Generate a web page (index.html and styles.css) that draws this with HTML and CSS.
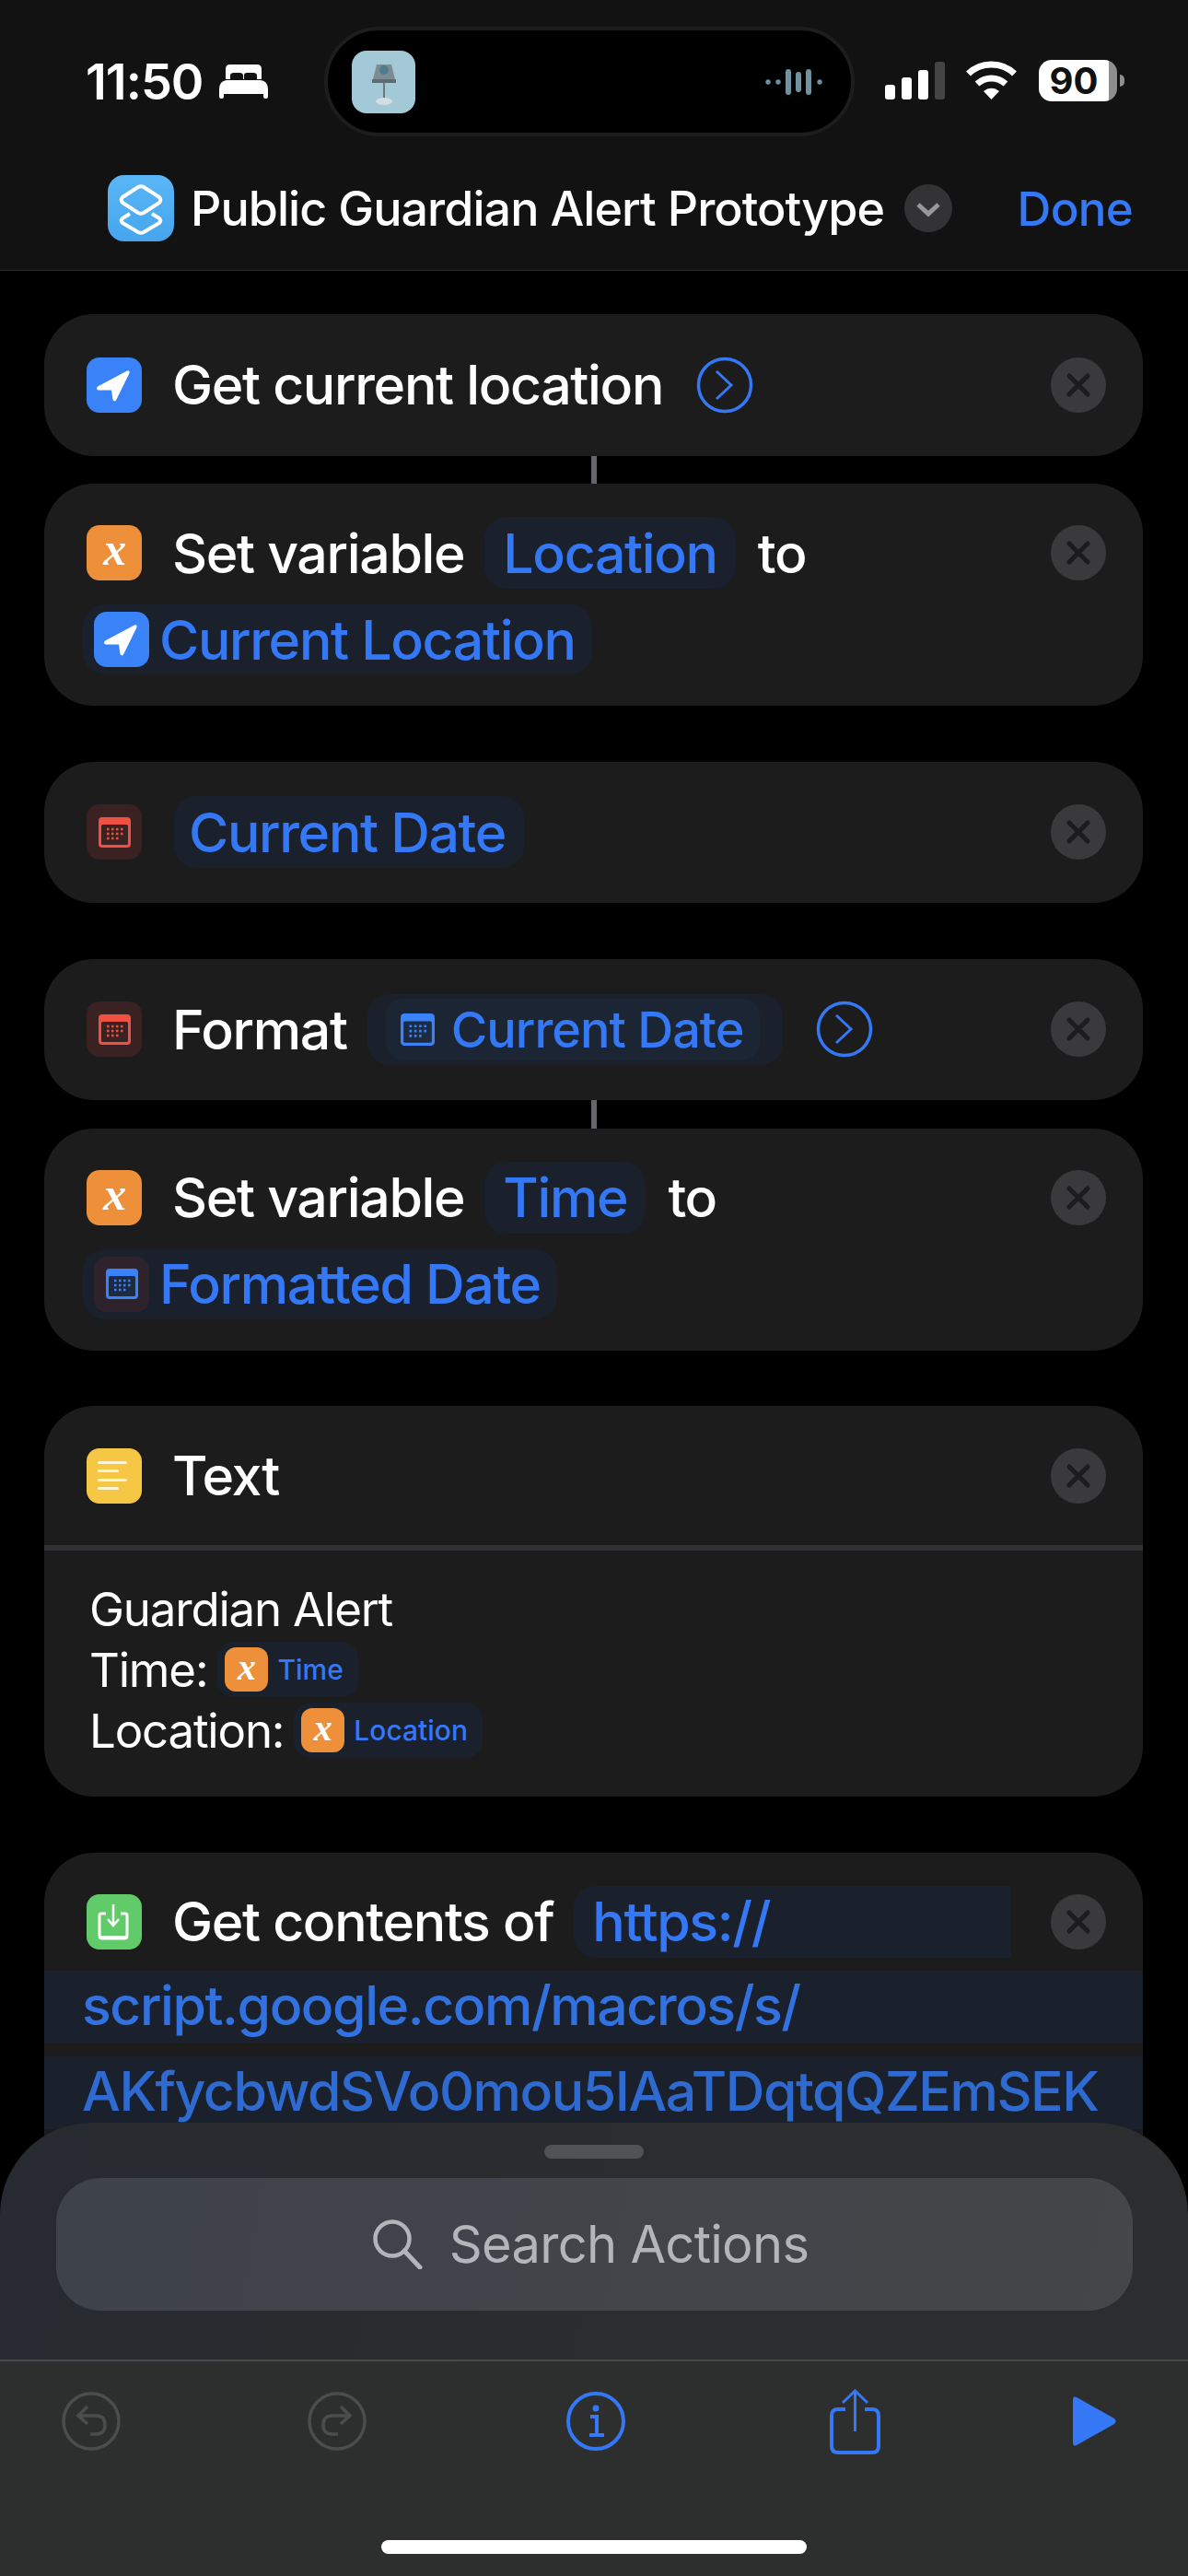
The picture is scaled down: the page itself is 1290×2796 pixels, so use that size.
FILE: index.html
```html
<!doctype html>
<html lang="en">
<head>
    <meta charset="UTF-8">
    <meta name="viewport" content="width=device-width, initial-scale=1.0">
    <title>Public Guardian Alert Prototype</title>
    <link rel="stylesheet" href="styles.css">
</head>
<body>
<svg class="sprites" width="0" height="0">
    <symbol id="arrow" viewBox="0 0 60 60">
        <path d="M44 14.500 L12 31.500 Q9.500 34.500 13 35.500 L27 35.500 L28.500 46 Q31 49 32.500 45.500 L46.500 17 Q47 13.500 44 14.500 Z" fill="#fff"/>
    </symbol>
    <symbol id="cal" viewBox="0 0 35 33">
        <rect width="35" height="33" rx="4" fill="currentColor"/>
        <rect x="3" y="8" width="29" height="22" rx="1.500" fill="var(--cal-in)"/>
        <path d="M9 13H27M9 18H27M9 23H22" stroke="currentColor" stroke-width="2.500" stroke-dasharray="2.500 2.500" fill="none"/>
    </symbol>
    <symbol id="chevron-circle" viewBox="0 0 62 62">
        <circle cx="31" cy="31" r="28.500" fill="none" stroke="#3478f6" stroke-width="3.500"/>
        <path d="M22 16 L38 31 L22 46" fill="none" stroke="#3478f6" stroke-width="3"/>
    </symbol>
    <symbol id="close" viewBox="0 0 60 60">
        <circle cx="30" cy="30" r="30" fill="#3a3a3c"/>
        <path d="M20 20 L40 40 M40 20 L20 40" stroke="#1c1c1e" stroke-width="5" stroke-linecap="round"/>
    </symbol>
</svg>

<header class="header">
    <div class="status">
        <span class="clock">11:50</span>
        <svg class="bed" viewBox="0 0 53 37">
            <path d="M7 16 V5 Q7 0 12 0 H41 Q46 0 46 5 V16 H41 V12 Q41 9 37 9 H30 Q27 9 27 12 V16 H26 V12 Q26 9 22 9 H16 Q12 9 12 12 V16 Z" fill="#fff"/>
            <path d="M0 27 Q0 18 8 17 H45 Q53 18 53 27 V35 Q53 37 51 37 H50 Q48 37 48 35 V32 H5 V35 Q5 37 3 37 H2 Q0 37 0 35 Z" fill="#fff"/>
        </svg>
        <div class="island">
            <div class="album">
                <svg width="69" height="68" viewBox="0 0 69 68">
                    <path d="M27 15 H43 L47 31 H23 Z" fill="#7d8c92"/>
                    <circle cx="35" cy="21" r="5" fill="#4c7c8e"/>
                    <rect x="22" y="31" width="26" height="4" fill="#5f6c72"/>
                    <rect x="34" y="35" width="2" height="19" fill="#6c7a80"/>
                    <ellipse cx="35" cy="55" rx="9" ry="4" fill="#d3dee2"/>
                </svg>
            </div>
            <svg class="wave" width="62" height="28" viewBox="0 0 62 28">
                <g fill="#6e929f">
                    <circle cx="3" cy="14" r="2.700"/>
                    <circle cx="14" cy="14" r="2.700"/>
                    <rect x="22" y="0" width="6" height="28" rx="3"/>
                    <rect x="33" y="3" width="6" height="22" rx="3"/>
                    <rect x="44" y="0" width="6" height="28" rx="3"/>
                    <circle cx="59" cy="14" r="2.700"/>
                </g>
            </svg>
        </div>
        <div class="status-right">
            <svg width="65" height="48" viewBox="0 0 65 48">
                <rect x="0" y="27" width="11" height="16" rx="3" fill="#fff"/>
                <rect x="18" y="19" width="11" height="24" rx="3" fill="#fff"/>
                <rect x="36" y="11" width="11" height="32" rx="3" fill="#fff"/>
                <rect x="54" y="2" width="11" height="41" rx="3" fill="#444"/>
            </svg>
            <svg class="wifi" width="57" height="48" viewBox="0 0 57 48">
                <path d="M3.500 15 C17 1.500 40 1.500 53.500 15" fill="none" stroke="#fff" stroke-width="7"/>
                <path d="M13 26 C22 18 35 18 44 26" fill="none" stroke="#fff" stroke-width="7"/>
                <path d="M20 34 C25 29.500 32 29.500 37 34 L28.500 43 Z" fill="#fff"/>
            </svg>
            <div class="battery">90</div>
            <div class="battery-nub"></div>
        </div>
    </div>
    <div class="title-bar">
        <div class="app-icon">
            <svg width="72" height="72" viewBox="0 0 72 72">
                <path d="M24 42 L16 47 Q13.500 49.500 16 52 L33 62 Q36 63.500 39 62 L56 52 Q58.500 49.500 56 47 L48 42" fill="none" stroke="#fff" stroke-width="4"/>
                <path d="M33 13 Q36 11.500 39 13 L56 24 Q58.500 27 56 30 L39 41 Q36 42.500 33 41 L16 30 Q13.500 27 16 24 Z" fill="none" stroke="#fff" stroke-width="4"/>
            </svg>
        </div>
        <span class="title">Public Guardian Alert Prototype</span>
        <div class="title-chevron">
            <svg width="52" height="52" viewBox="0 0 52 52">
                <path d="M15 22 L26 32 L37 22" fill="none" stroke="#98989d" stroke-width="5"/>
            </svg>
        </div>
        <span class="done">Done</span>
    </div>
</header>

<main class="list">
    <section class="card card-single">
        <div class="row">
            <div class="tile tile-blue"><svg width="60" height="60"><use href="#arrow"/></svg></div>
            <span class="label">Get current location</span>
            <svg class="more" width="62" height="62"><use href="#chevron-circle"/></svg>
            <svg class="remove" width="60" height="60"><use href="#close"/></svg>
        </div>
    </section>
    <div class="link"></div>
    <section class="card card-double">
        <div class="row">
            <div class="tile tile-orange">x</div>
            <span class="label">Set variable</span>
            <span class="pill">Location</span>
            <span class="label">to</span>
            <svg class="remove" width="60" height="60"><use href="#close"/></svg>
        </div>
        <div class="row row-second">
            <span class="pill pill-icon">
                <span class="tile tile-blue"><svg width="60" height="60"><use href="#arrow"/></svg></span>
                Current Location
            </span>
        </div>
    </section>

    <section class="card card-single gap-top">
        <div class="row">
            <div class="tile tile-red"><svg class="cal" width="35" height="33"><use href="#cal"/></svg></div>
            <span class="pill pill-date">Current Date</span>
            <svg class="remove" width="60" height="60"><use href="#close"/></svg>
        </div>
    </section>

    <section class="card card-single gap-top">
        <div class="row">
            <div class="tile tile-red"><svg class="cal" width="35" height="33"><use href="#cal"/></svg></div>
            <span class="label">Format</span>
            <span class="pill-outer">
                <span class="pill-inner">
                    <svg class="cal cal-blue" width="37" height="35"><use href="#cal"/></svg>
                    Current Date
                </span>
            </span>
            <svg class="more" width="62" height="62"><use href="#chevron-circle"/></svg>
            <svg class="remove" width="60" height="60"><use href="#close"/></svg>
        </div>
    </section>
    <div class="link"></div>
    <section class="card card-double">
        <div class="row">
            <div class="tile tile-orange">x</div>
            <span class="label">Set variable</span>
            <span class="pill">Time</span>
            <span class="label">to</span>
            <svg class="remove" width="60" height="60"><use href="#close"/></svg>
        </div>
        <div class="row row-second">
            <span class="pill pill-icon">
                <span class="tile tile-dim"><svg class="cal cal-blue" width="35" height="33"><use href="#cal"/></svg></span>
                Formatted Date
            </span>
        </div>
    </section>

    <section class="card card-text gap-top">
        <div class="row text-head">
            <div class="tile tile-yellow">
                <span class="bar-long"></span>
                <span class="bar-short"></span>
                <span class="bar-long"></span>
                <span class="bar-short"></span>
            </div>
            <span class="label">Text</span>
            <svg class="remove" width="60" height="60"><use href="#close"/></svg>
        </div>
        <div class="text-body">
            <div class="text-line">Guardian Alert</div>
            <div class="text-line">Time:
                <span class="token"><span class="token-icon">x</span>Time</span>
            </div>
            <div class="text-line">Location:
                <span class="token"><span class="token-icon">x</span>Location</span>
            </div>
        </div>
    </section>

    <section class="card card-url gap-top">
        <div class="row">
            <div class="tile tile-green">
                <svg width="60" height="60" viewBox="0 0 60 60">
                    <path d="M21 21 H16 Q14 21 14 23 V45 Q14 48 17 48 H41 Q44 48 44 45 V23 Q44 21 42 21 H37" fill="none" stroke="#fff" stroke-width="3"/>
                    <path d="M14 45 H44 V48 H14 Z" fill="#fff"/>
                    <path d="M29 11 V33 M23 27 L29 34 L35 27" fill="none" stroke="#fff" stroke-width="2.500"/>
                </svg>
            </div>
            <span class="label">Get contents of</span>
            <span class="pill pill-url">https://</span>
            <svg class="remove" width="60" height="60"><use href="#close"/></svg>
        </div>
        <div class="url-band">script.google.com/macros/s/</div>
        <div class="url-band url-band-dim">AKfycbwdSVo0mou5IAaTDqtqQZEmSEK</div>
    </section>
</main>

<div class="sheet">
    <div class="grabber"></div>
    <div class="search">
        <svg width="54" height="54" viewBox="0 0 54 54">
            <circle cx="21" cy="21" r="18.500" fill="none" stroke="#b4b5b8" stroke-width="4.500"/>
            <path d="M34 34 L51 52" stroke="#b4b5b8" stroke-width="5" stroke-linecap="round"/>
        </svg>
        <span>Search Actions</span>
    </div>
    <div class="bottom">
        <div class="toolbar">
            <svg class="tool" width="64" height="64" viewBox="0 0 64 64">
                <circle cx="32" cy="32" r="30" fill="none" stroke="#4b4c4c" stroke-width="3.500"/>
                <path d="M28 16 L18 26 L28 35 M19 26 H37 Q47 26 47 36 Q47 46 37 46 H31" fill="none" stroke="#4b4c4c" stroke-width="3.500"/>
            </svg>
            <svg class="tool tool-redo" width="64" height="64" viewBox="0 0 64 64">
                <circle cx="32" cy="32" r="30" fill="none" stroke="#4b4c4c" stroke-width="3.500"/>
                <path d="M36 16 L46 26 L36 35 M45 26 H27 Q17 26 17 36 Q17 46 27 46 H33" fill="none" stroke="#4b4c4c" stroke-width="3.500"/>
            </svg>
            <svg class="tool tool-info" width="64" height="64" viewBox="0 0 64 64">
                <circle cx="32" cy="32" r="30" fill="none" stroke="#3478f6" stroke-width="4"/>
                <circle cx="32" cy="18" r="3.500" fill="#3478f6"/>
                <path d="M26 27 H33 V47 M25 47 H41" fill="none" stroke="#3478f6" stroke-width="4"/>
            </svg>
            <svg class="tool tool-share" width="55" height="71" viewBox="0 0 55 71">
                <path d="M17 22 H9 Q2 22 2 29 V62 Q2 69 9 69 H46 Q53 69 53 62 V29 Q53 22 46 22 H38" fill="none" stroke="#3478f6" stroke-width="4"/>
                <path d="M27.500 3 V46 M14 15 L27.500 2 L41 15" fill="none" stroke="#3478f6" stroke-width="3"/>
            </svg>
            <svg class="tool tool-play" width="47" height="54" viewBox="0 0 47 54">
                <path d="M0 4 Q0 -1 4 1 L45 24 Q48 27 45 30 L4 53 Q0 55 0 50 Z" fill="#3478f6"/>
            </svg>
        </div>
        <div class="home-bar"></div>
    </div>
</div>
</body>
</html>
```

FILE: styles.css
```css
* {
    margin: 0;
    padding: 0;
    box-sizing: border-box;
}

html, body {
    width: 1290px;
    height: 2796px;
    overflow: hidden;
}

body {
    position: relative;
    background: #000;
    color: #fff;
    font-family: Inter, "Liberation Sans", sans-serif;
}

.sprites {
    position: absolute;
}

/* status bar + title */
.header {
    height: 294px;
    background: #121212;
    border-bottom: 1px solid #2c2c2c;
}

.status {
    display: flex;
    align-items: center;
    height: 148px;
    padding: 29px 0 0 93px;
}

.clock {
    font-size: 54px;
    font-weight: 600;
    letter-spacing: -1px;
    width: 145px;
}

.bed {
    width: 53px;
    height: 37px;
}

.island {
    display: flex;
    align-items: center;
    justify-content: space-between;
    width: 576px;
    height: 119px;
    margin-left: 61px;
    padding: 0 31px 0 26px;
    background: #000;
    border: 4px solid #1d1d1d;
    border-radius: 60px;
}

.album {
    width: 69px;
    height: 68px;
    background: #a3c9d6;
    border-radius: 16px;
}

.status-right {
    display: flex;
    align-items: center;
    height: 48px;
    margin-left: 33px;
}

.wifi {
    margin-left: 22px;
}

.battery {
    width: 85px;
    height: 45px;
    margin: 0 0 3px 23px;
    padding-right: 9px;
    background: linear-gradient(90deg, #fff 89%, #8e8e8e 89%);
    border-radius: 14px;
    color: #111;
    font-size: 40px;
    font-weight: 700;
    line-height: 45px;
    text-align: center;
}

.battery-nub {
    width: 5px;
    height: 13px;
    margin: 0 0 3px 3px;
    background: #8e8e8e;
    border-radius: 0 5px 5px 0;
}

.title-bar {
    display: flex;
    align-items: center;
    padding: 42px 60px 0 117px;
}

.app-icon {
    width: 72px;
    height: 72px;
    background: linear-gradient(#5ab6f6, #46a5ee);
    border-radius: 18px;
}

.title {
    margin-left: 18px;
    font-size: 52px;
    font-weight: 500;
    letter-spacing: -0.950px;
}

.title-chevron {
    width: 52px;
    height: 52px;
    margin-left: 22px;
    background: #333336;
    border-radius: 50%;
}

.done {
    margin-left: auto;
    color: #3478f6;
    font-size: 51px;
    font-weight: 500;
    letter-spacing: -0.700px;
}

/* action cards */
.list {
    padding: 47px 49px 0 48px;
}

.card {
    background: #1c1c1c;
    border-radius: 54px;
    padding: 0 40px 0 46px;
    font-size: 59px;
    font-weight: 450;
    letter-spacing: -1.350px;
}

.gap-top {
    margin-top: 60.500px;
}

.link {
    width: 6px;
    height: 30.500px;
    margin: 0 auto;
    background: #66666a;
}

.card-single {
    display: flex;
    align-items: center;
    height: 153.500px;
}

.card-double {
    padding-top: 36px;
    padding-bottom: 34px;
}

.row {
    display: flex;
    align-items: center;
    width: 100%;
}

.row-second {
    margin-top: 17px;
}

.label {
    margin-left: 33px;
}

.pill + .label {
    margin-left: 24px;
}

.label + .pill {
    margin-left: 22px;
}

.tile {
    flex: none;
    display: flex;
    align-items: center;
    justify-content: center;
    width: 60px;
    height: 60px;
    border-radius: 14px;
}

.tile-blue {
    background: #3a82f7;
}

.tile-orange {
    background: #ee8f39;
    font-family: "Liberation Serif", serif;
    font-size: 50px;
    font-style: italic;
    font-weight: 700;
    line-height: 50px;
    padding-bottom: 8px;
}

.tile-red {
    background: #3a2222;
}

.tile-dim {
    background: #2e232c;
}

.tile-yellow {
    flex-direction: column;
    align-items: flex-start;
    gap: 6.500px;
    padding-left: 12px;
    background: #f6c744;
}

.bar-long, .bar-short {
    height: 3px;
    background: #fff4d4;
    border-radius: 2px;
}

.bar-long {
    width: 32px;
}

.bar-short {
    width: 23px;
}

.tile-green {
    background: #62cb69;
}

.cal {
    color: #ef5042;
    --cal-in: #3a2222;
}

.cal-blue {
    color: #3a82f7;
    --cal-in: #1d2a40;
}

.pill {
    flex: none;
    display: flex;
    align-items: center;
    height: 78px;
    padding: 0 20px;
    background: #1a212c;
    border-radius: 24px;
    color: #3478f6;
}

.pill-icon {
    gap: 11px;
    height: 76px;
    margin-left: -4px;
    padding: 0 18px 0 12px;
}

.pill-date {
    margin-left: 35px;
    padding: 0 20px 0 16px;
}

.pill-outer {
    display: flex;
    align-items: center;
    height: 77px;
    margin-left: 22px;
    padding: 0 25px 0 20px;
    background: #1a212c;
    border-radius: 24px;
}

.pill-inner {
    display: flex;
    align-items: center;
    gap: 18px;
    height: 66px;
    padding: 0 18px 0 16px;
    background: #1b2534;
    border-radius: 18px;
    color: #3478f6;
    font-size: 54px;
    letter-spacing: -1px;
}

.more {
    flex: none;
    margin-left: 36px;
}

.remove {
    flex: none;
    margin-left: auto;
}

/* text action */
.card-text {
    padding: 0;
    height: 424px;
}

.text-head {
    height: 151px;
    padding: 0 40px 0 46px;
}

.text-body {
    padding: 30px 0 0 49px;
    border-top: 6px solid #323236;
    font-weight: 400;
}

.text-line {
    display: flex;
    align-items: center;
    gap: 11px;
    height: 66px;
    font-size: 51px;
    letter-spacing: -1.200px;
}

.token {
    display: flex;
    align-items: center;
    height: 60px;
    padding: 0 16px 0 8px;
    background: #1a212c;
    border-radius: 18px;
    color: #3478f6;
    font-size: 30px;
    font-weight: 500;
    letter-spacing: 0;
}

.token-icon {
    display: flex;
    align-items: center;
    justify-content: center;
    width: 47px;
    height: 48px;
    margin-right: 10px;
    padding-bottom: 6px;
    background: #ee8f39;
    border-radius: 12px;
    color: #fff;
    font-family: "Liberation Serif", serif;
    font-size: 40px;
    font-style: italic;
    font-weight: 700;
}

/* url action */
.card-url {
    padding: 36px 0 80px;
}

.card-url .row {
    padding: 0 40px 0 46px;
}

.pill-url {
    width: 475px;
    border-radius: 24px 0 0 24px;
}

.url-band {
    height: 79px;
    margin-top: 14px;
    padding-left: 41px;
    background: #1a212c;
    color: #3272e0;
    line-height: 76px;
    white-space: nowrap;
    letter-spacing: -1.450px;
}

.url-band-dim {
    color: #2e6ad0;
}

/* bottom sheet over the list */
.sheet {
    position: absolute;
    left: 0;
    right: 0;
    bottom: 0;
    height: 492px;
    overflow: hidden;
    background: linear-gradient(100deg, #272a30, #2c2d2e 60%);
    border-radius: 100px 100px 0 0;
}

.grabber {
    width: 108px;
    height: 15px;
    margin: 24px auto 0;
    background: #515254;
    border-radius: 8px;
}

.search {
    display: flex;
    align-items: center;
    justify-content: center;
    gap: 29px;
    width: 1169px;
    height: 144px;
    margin: 21px 0 0 61px;
    padding-right: 8px;
    background: linear-gradient(100deg, #3e4249, #454649);
    border-radius: 48px;
    color: #b4b5b8;
    font-size: 56px;
    letter-spacing: -0.700px;
}

.bottom {
    height: 235px;
    margin-top: 53px;
    background: #2d2e2e;
    border-top: 2px solid #474848;
}

.toolbar {
    display: flex;
    align-items: center;
    height: 130px;
    padding-left: 67px;
}

.tool {
    flex: none;
}

.tool-redo {
    margin-left: 203px;
}

.tool-info {
    margin-left: 217px;
}

.tool-share {
    margin-left: 222px;
}

.tool-play {
    margin-left: 209px;
}

.home-bar {
    width: 462px;
    height: 15px;
    margin: 64px 0 0 414px;
    background: #fff;
    border-radius: 8px;
}
```
